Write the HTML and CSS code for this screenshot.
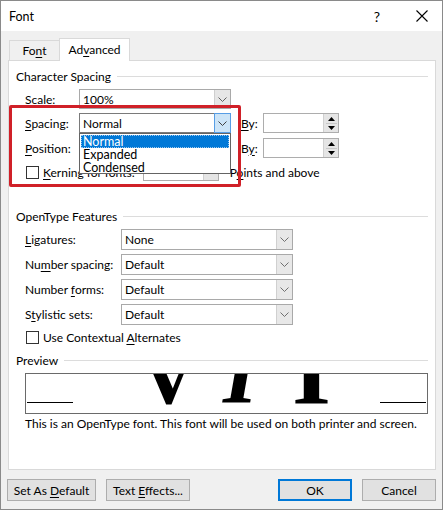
FILE: index.html
```html
<!DOCTYPE html>
<html>
<head>
<meta charset="utf-8">
<link rel="stylesheet" href="styles.css">
</head>
<body>
<div class="window">
  <div class="titlebar">
    <span class="title">Font</span>
    <span class="help">?</span>
    <span class="close"><svg width="12" height="12" viewBox="0 0 12 12"><path d="M0.5 0.5L11.5 11.5M11.5 0.5L0.5 11.5" stroke="#000" stroke-width="1.1" fill="none"/></svg></span>
  </div>
  <div class="body">
    <div class="tabs">
      <div class="tab"><span>Fo<u>n</u>t</span></div>
      <div class="tab active"><span>Ad<u>v</u>anced</span></div>
    </div>
    <div class="panel">
      <div class="group-title"><span>Character Spacing</span><i class="rule"></i></div>

      <div class="row r-scale">
        <span class="lbl lbl-cs">S<u>c</u>ale:</span>
        <div class="combo cs-combo"><span class="val">100%</span><span class="arrow"><svg width="9" height="5" viewBox="0 0 9 5"><path d="M0.5 0.5L4.5 4.5L8.5 0.5" stroke="#606060" fill="none"/></svg></span></div>
      </div>

      <div class="row r-spacing">
        <span class="lbl lbl-cs"><u>S</u>pacing:</span>
        <div class="combo cs-combo open"><span class="val">Normal</span><span class="arrow"><svg width="9" height="5" viewBox="0 0 9 5"><path d="M0.5 0.5L4.5 4.5L8.5 0.5" stroke="#404040" fill="none"/></svg></span></div>
        <span class="by"><u>B</u>y:</span>
        <div class="spin"><span class="sval"></span><span class="sbtns"><svg width="7" height="4" viewBox="0 0 7 4"><path d="M3.5 0L7 4H0Z" fill="#000"/></svg><i class="sep"></i><svg width="7" height="4" viewBox="0 0 7 4"><path d="M0 0H7L3.5 4Z" fill="#000"/></svg></span></div>
      </div>

      <div class="row r-position">
        <span class="lbl lbl-cs"><u>P</u>osition:</span>
        <div class="combo cs-combo"><span class="val"></span><span class="arrow"></span></div>
        <span class="by">B<u>y</u>:</span>
        <div class="spin"><span class="sval"></span><span class="sbtns"><svg width="7" height="4" viewBox="0 0 7 4"><path d="M3.5 0L7 4H0Z" fill="#000"/></svg><i class="sep"></i><svg width="7" height="4" viewBox="0 0 7 4"><path d="M0 0H7L3.5 4Z" fill="#000"/></svg></span></div>
      </div>

      <div class="row r-kerning">
        <span class="check"></span>
        <span class="klabel"><u>K</u>erning for fonts:</span>
        <div class="kcombo"><span class="val"></span><span class="karrow"><svg width="7" height="4" viewBox="0 0 7 4"><path d="M0 0H7L3.5 4Z" fill="#000"/></svg></span></div>
        <span class="points">P<u>o</u>ints and above</span>
      </div>

      <div class="group-title g-ot"><span>OpenType Features</span><i class="rule"></i></div>

      <div class="row ot-row first">
        <span class="lbl lbl-ot"><u>L</u>igatures:</span>
        <div class="combo ot-combo"><span class="val">None</span><span class="arrow"><svg width="9" height="5" viewBox="0 0 9 5"><path d="M0.5 0.5L4.5 4.5L8.5 0.5" stroke="#707070" fill="none"/></svg></span></div>
      </div>
      <div class="row ot-row">
        <span class="lbl lbl-ot">Nu<u>m</u>ber spacing:</span>
        <div class="combo ot-combo"><span class="val">Default</span><span class="arrow"><svg width="9" height="5" viewBox="0 0 9 5"><path d="M0.5 0.5L4.5 4.5L8.5 0.5" stroke="#707070" fill="none"/></svg></span></div>
      </div>
      <div class="row ot-row">
        <span class="lbl lbl-ot">Number <u>f</u>orms:</span>
        <div class="combo ot-combo"><span class="val">Default</span><span class="arrow"><svg width="9" height="5" viewBox="0 0 9 5"><path d="M0.5 0.5L4.5 4.5L8.5 0.5" stroke="#707070" fill="none"/></svg></span></div>
      </div>
      <div class="row ot-row">
        <span class="lbl lbl-ot">S<u>t</u>ylistic sets:</span>
        <div class="combo ot-combo"><span class="val">Default</span><span class="arrow"><svg width="9" height="5" viewBox="0 0 9 5"><path d="M0.5 0.5L4.5 4.5L8.5 0.5" stroke="#707070" fill="none"/></svg></span></div>
      </div>

      <div class="row r-ctx">
        <span class="check"></span>
        <span class="klabel">Use Contextual <u>A</u>lternates</span>
      </div>

      <div class="group-title g-prev"><span>Preview</span><i class="rule"></i></div>

      <div class="preview">
        <i class="uline"></i>
        <span class="glyph g1">V</span>
        <span class="glyph g2">I</span>
        <span class="glyph g3">I</span>
        <i class="uline"></i>
      </div>
      <div class="desc">This is an OpenType font. This font will be used on both printer and screen.</div>

      <div class="highlight"></div>
      <div class="dropdown">
        <div class="item sel">Normal</div>
        <div class="item">Expanded</div>
        <div class="item">Condensed</div>
      </div>
    </div>

    <div class="buttons">
      <div class="btn b-default"><span>Set As <u>D</u>efault</span></div>
      <div class="btn b-effects"><span>Text <u>E</u>ffects...</span></div>
      <div class="btn b-ok"><span>OK</span></div>
      <div class="btn b-cancel"><span>Cancel</span></div>
    </div>
  </div>
</div>
</body>
</html>
```

FILE: styles.css
```css
* { box-sizing: border-box; }
html, body { margin: 0; padding: 0; background: #fff; }
body {
  font-family: Lato, "Noto Sans", sans-serif;
  font-size: 12px;
  color: #000;
}
u { text-decoration: underline; text-underline-offset: 2px; text-decoration-thickness: 1px; }

.window {
  width: 443px;
  height: 510px;
  border: 1px solid #8a8a8a;
  background: #f0f0f0;
  display: flex;
  flex-direction: column;
  white-space: nowrap;
}

.titlebar {
  height: 30px;
  background: #fff;
  display: flex;
  align-items: center;
  flex: none;
}
.title { margin-left: 8px; font-size: 12.5px; }
.help { margin-left: auto; margin-right: 36px; font-size: 14px; }
.close { margin-right: 14px; display: flex; }

.body { flex: 1; display: flex; flex-direction: column; }

.tabs {
  height: 29px;
  display: flex;
  align-items: flex-end;
  padding-left: 8px;
  flex: none;
}
.tab {
  height: 20px;
  border: 1px solid #d9d9d9;
  border-bottom: none;
  background: #f0f0f0;
  display: flex;
  align-items: center;
  justify-content: center;
  width: 51px;
}
.tab.active {
  height: 23px;
  width: 71px;
  margin-left: -1px;
  margin-bottom: -1px;
  background: #fff;
  position: relative;
  z-index: 1;
  padding-bottom: 2px;
}

.panel {
  margin-left: 7px;
  width: 428px;
  height: 410px;
  background: #fff;
  border: 1px solid #d9d9d9;
  position: relative;
  flex: none;
}

.group-title {
  display: flex;
  align-items: center;
  height: 16px;
  margin-top: 7px;
  padding-left: 7px;
  padding-right: 7px;
}
.group-title .rule {
  flex: 1;
  height: 1px;
  background: #dcdcdc;
  margin-left: 6px;
  margin-top: 1px;
}
.g-ot { margin-top: 27px; }
.g-prev { margin-top: 8px; }

.row {
  display: flex;
  align-items: center;
  padding-left: 16px;
}
.r-scale { margin-top: 5px; height: 20px; }
.r-spacing { margin-top: 4px; height: 20px; }
.r-position { margin-top: 5px; height: 20px; }
.r-kerning { margin-top: 5px; height: 18px; }
.ot-row { margin-top: 4px; height: 21px; }
.ot-row.first { margin-top: 5px; }
.r-ctx { margin-top: 5px; height: 14px; }

.lbl-cs { width: 54px; flex: none; }
.lbl-ot { width: 96px; flex: none; }

.combo {
  height: 100%;
  border: 1px solid #a9a9a9;
  display: flex;
  background: #fff;
  flex: none;
}
.combo .val { flex: 1; padding-left: 3px; display: flex; align-items: center; }
.combo .arrow {
  width: 16px;
  border-left: 1px solid #d0d0d0;
  background: #e8e8e8;
  display: flex;
  align-items: center;
  justify-content: center;
}
.cs-combo { width: 152px; }
.cs-combo .arrow { background: #e6e6e6; border-left-color: #cfcfcf; }
.cs-combo.open { border-color: #7a7a7a; }
.cs-combo.open .arrow { background: #cce4f7; border: 1px solid #569de5; margin: -1px -1px -1px 0; width: 17px; }
.r-position .cs-combo .arrow { background: #fff; border-left: none; }
.ot-combo { width: 172px; }

.by { margin-left: 10px; width: 22px; flex: none; }
.spin {
  width: 76px;
  height: 100%;
  border: 1px solid #adadad;
  display: flex;
  flex: none;
}
.sval { flex: 1; }
.sbtns {
  width: 15px;
  background: #e5e5e5;
  border-left: 1px solid #d0d0d0;
  display: flex;
  flex-direction: column;
  align-items: center;
  justify-content: center;
  gap: 2px;
}
.sbtns .sep { width: 11px; height: 1px; background: #c8c8c8; }

.check {
  width: 13px;
  height: 13px;
  border: 1px solid #333;
  background: #fff;
  margin-left: 1px;
  flex: none;
}
.klabel { margin-left: 4px; }
.kcombo {
  margin-left: 8px;
  width: 76px;
  height: 18px;
  border: 1px solid #adadad;
  display: flex;
  flex: none;
}
.kcombo .val { flex: 1; }
.karrow {
  width: 15px;
  background: #e5e5e5;
  border-left: 1px solid #d0d0d0;
  display: flex;
  align-items: center;
  justify-content: center;
}
.points { margin-left: 11px; }

.preview {
  margin-top: 5px;
  margin-left: 16px;
  width: 403px;
  height: 41px;
  border: 1px solid #6a6a6a;
  position: relative;
  overflow: hidden;
  display: flex;
  justify-content: space-between;
  align-items: flex-end;
  padding: 0 1px 10px 1px;
}
.uline { width: 46px; height: 1px; background: #000; }
.glyph {
  position: absolute;
  font-family: "Liberation Serif", serif;
  font-weight: bold;
  font-size: 90px;
  line-height: 90px;
  top: -46px;
}
.g1 { left: 113px; font-size: 82px; line-height: 82px; top: -39px; }
.g2 { left: 197px; font-style: italic; }
.g3 { left: 266px; font-size: 100px; line-height: 100px; top: -54px; }

.desc {
  margin-top: 2px;
  padding-left: 16px;
  height: 16px;
  line-height: 16px;
}

.highlight {
  position: absolute;
  left: 0px;
  top: 44px;
  width: 232px;
  height: 82px;
  border: 3px solid #d02028;
  border-radius: 2px;
}
.dropdown {
  position: absolute;
  left: 70px;
  top: 72px;
  width: 152px;
  height: 41px;
  background: #fff;
  border: 1px solid #646464;
  padding: 0 1px;
  font-size: 12.5px;
}
.dropdown .item {
  height: 13px;
  line-height: 13px;
  padding-left: 2px;
}
.dropdown .item.sel {
  background: #0078d7;
  color: #fff;
  outline: 1px dotted #9ac7ee;
  outline-offset: -1px;
  margin-top: 1px;
}

.buttons {
  display: flex;
  margin-top: 9px;
  padding-left: 6px;
}
.btn {
  height: 22px;
  background: #e1e1e1;
  border: 1px solid #adadad;
  display: flex;
  align-items: center;
  justify-content: center;
  flex: none;
}
.b-default { width: 89px; }
.b-effects { width: 84px; margin-left: 10px; }
.b-ok { width: 74px; margin-left: auto; border: 2px solid #0078d7; }
.b-cancel { width: 74px; margin-left: 10px; margin-right: 6px; }
```
